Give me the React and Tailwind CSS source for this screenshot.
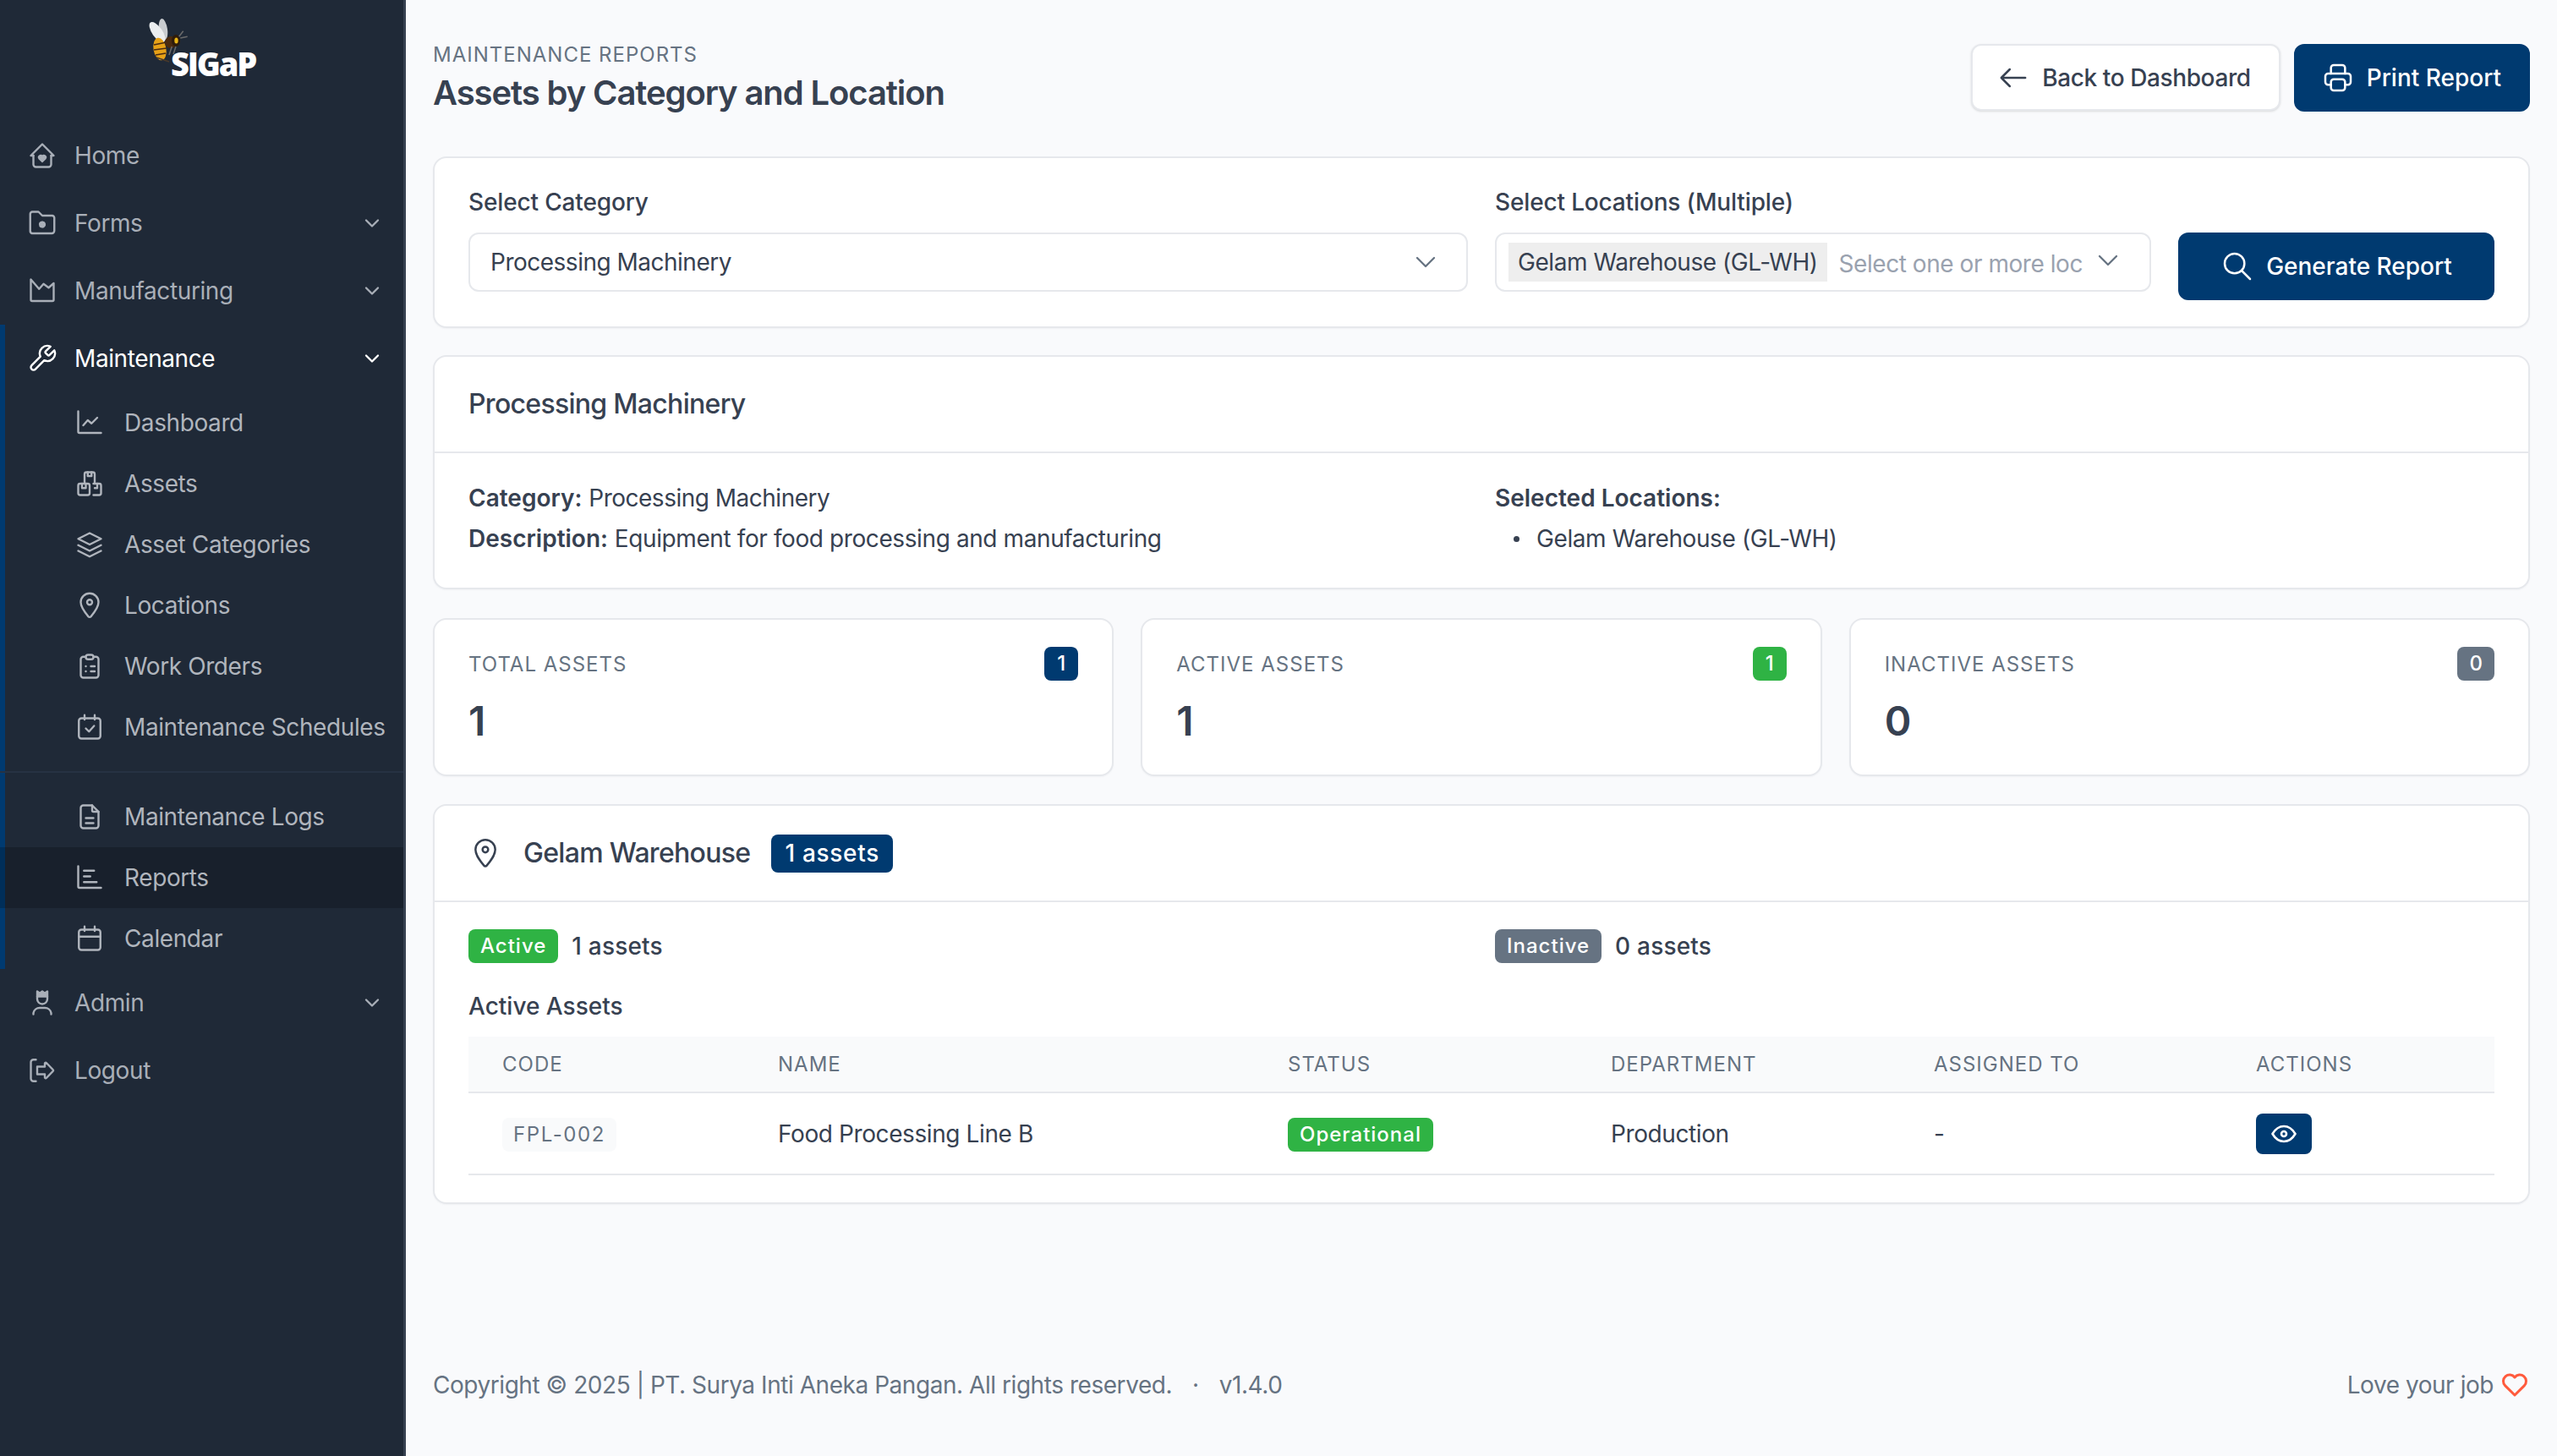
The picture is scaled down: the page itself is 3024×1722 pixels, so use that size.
const font = "font-['Inter',sans-serif]";

const Icon = ({ className = 'w-9 h-9', sw = 1.6, children }) => (
  <svg viewBox="0 0 24 24" fill="none" stroke="currentColor" strokeWidth={sw} strokeLinecap="round" strokeLinejoin="round" className={className}>
    {children}
  </svg>
);

const icons = {
  home: (
    <>
      <path d="M5 12H3l9-9 9 9h-2" />
      <path d="M5 12v7a2 2 0 0 0 2 2h10a2 2 0 0 0 2-2v-7" />
      <path d="M12 17l-2.6-2.6a1.6 1.6 0 0 1 2.6-1.9 1.6 1.6 0 0 1 2.6 1.9z" fill="currentColor" strokeWidth="1" />
    </>
  ),
  forms: (
    <>
      <path d="M4 3h5l3 3h8a2 2 0 0 1 1.5 1.5V18a2 2 0 0 1-2 2H4a2 2 0 0 1-1.5-2V5A2 2 0 0 1 4 3" />
      <circle cx="12" cy="13" r="2" fill="currentColor" strokeWidth="1.5" strokeDasharray="1.2 0.9" />
    </>
  ),
  factory: <path d="M3 3v16a1 1 0 0 0 1 1h16a1 1 0 0 0 1-1V6l-4 3.5-4-3-3.5 4z" />,
  wrench: <path d="M14.7 6.3a1 1 0 0 0 0 1.4l1.6 1.6a1 1 0 0 0 1.4 0l3.77-3.77a6 6 0 0 1-7.94 7.94l-6.91 6.91a2.12 2.12 0 0 1-3-3l6.91-6.91a6 6 0 0 1 7.94-7.94l-3.76 3.76z" />,
  chart: (
    <>
      <path d="M3 3v16a1 1 0 0 0 1 1h17" />
      <path d="M7 14l3.5-4 3 2.5 4.5-4.5" />
    </>
  ),
  packages: (
    <>
      <path d="M8 11V4.5A1.5 1.5 0 0 1 9.5 3h5A1.5 1.5 0 0 1 16 4.5V11" />
      <path d="M10.5 3v3h3V3" />
      <rect x="3" y="12" width="9" height="9" rx="1.5" />
      <path d="M6 12v3.5h3V12" />
      <path d="M15 12h4.5a1.5 1.5 0 0 1 1.5 1.5v6a1.5 1.5 0 0 1-1.5 1.5H15" />
      <path d="M18 12v3.5h-2" />
    </>
  ),
  stack: (
    <>
      <path d="M12 3l-9 4.5 9 4.5 9-4.5z" />
      <path d="M3 12.5l9 4.5 9-4.5" />
      <path d="M3 17l9 4.5 9-4.5" />
    </>
  ),
  pin: (
    <>
      <circle cx="12" cy="9.5" r="2" />
      <path d="M12 2.5a7 7 0 0 1 7 7c0 3.5-2 6.5-6 11.3a1.3 1.3 0 0 1-2 0C7 16 5 13 5 9.5a7 7 0 0 1 7-7z" />
    </>
  ),
  clipboard: (
    <>
      <path d="M9 4.5H7a2 2 0 0 0-2 2V19a2 2 0 0 0 2 2h10a2 2 0 0 0 2-2V6.5a2 2 0 0 0-2-2h-2" />
      <rect x="9" y="3" width="6" height="3.5" rx="1.7" />
      <path d="M9 12h.01M13 12h3M9 16h.01M13 16h3" />
    </>
  ),
  schedule: (
    <>
      <rect x="3.5" y="5" width="17" height="16" rx="2" />
      <path d="M16 2.5V6M8 2.5V6" />
      <path d="M9 13l2.5 2.5L15.5 11" />
    </>
  ),
  file: (
    <>
      <path d="M14 3v4a1 1 0 0 0 1 1h4" />
      <path d="M17 21H7a2 2 0 0 1-2-2V5a2 2 0 0 1 2-2h7l5 5v11a2 2 0 0 1-2 2z" />
      <path d="M9 13h6M9 17h6" />
    </>
  ),
  report: (
    <>
      <path d="M3 3v16a1 1 0 0 0 1 1h17" />
      <path d="M7.5 6.5h8M7.5 11h5M7.5 15.5h10" />
    </>
  ),
  calendar: (
    <>
      <rect x="3.5" y="5" width="17" height="16" rx="2" />
      <path d="M16 2.5V6M8 2.5V6M3.5 10.5h17" />
    </>
  ),
  admin: (
    <>
      <path d="M8 3l2 1.5L12 3l2 1.5L16 3v4H8z" fill="currentColor" />
      <path d="M8 7v2a4 4 0 0 0 8 0V7" />
      <path d="M5 21v-1a5 5 0 0 1 5-4h4a5 5 0 0 1 5 4v1" />
    </>
  ),
  logout: (
    <>
      <path d="M7 3.5H5a2 2 0 0 0-2 2v13a2 2 0 0 0 2 2h2" />
      <path d="M14 9V6.5a.7.7 0 0 1 1.2-.5l5.3 5.500a.7.7 0 0 1 0 1L15.2 18a.7.7 0 0 1-1.2-.5V15H8V9z" />
    </>
  ),
};

const Chevron = ({ className = 'w-7 h-7', sw = 2 }) => (
  <Icon className={className} sw={sw}>
    <path d="M6 9l6 6 6-6" />
  </Icon>
);

function Bee() {
  return (
    <svg viewBox="0 0 50 54" className="h-[54px] w-[50px]">
      <ellipse cx="18" cy="13" rx="5" ry="13" fill="#c9ccd0" transform="rotate(-8 18 13)" />
      <ellipse cx="11" cy="16" rx="6" ry="14" fill="#eceef0" transform="rotate(-35 11 16)" />
      <ellipse cx="14" cy="36" rx="7.5" ry="13.5" fill="#e6a117" transform="rotate(-10 14 36)" />
      <path d="M7 31l15-3M7 37l15-2M9 43l12-2" stroke="#4a2a10" strokeWidth="1.5" fill="none" />
      <path d="M10 46l15 5" stroke="#4a3a2a" strokeWidth="1.5" fill="none" />
      <circle cx="27" cy="28" r="7" fill="#4a2a10" />
      <ellipse cx="33" cy="26" rx="5" ry="7" fill="#2e1c0c" />
      <ellipse cx="33.5" cy="26" rx="2.2" ry="3.5" fill="#e8b516" />
      <path d="M36.7 21.3l5-6.6M38.3 23l8.4-1.7M28.3 33L25 43M33 33l-3 9" stroke="#6b6b6b" strokeWidth="1.5" fill="none" />
    </svg>
  );
}

function NavItem({ icon, label, hasMenu, active }) {
  return (
    <div className={`flex h-20 items-center pr-[23px] pl-[32px] ${active ? 'text-white' : 'text-[#a9afb8]'}`}>
      <span className="flex w-[56px] shrink-0">
        <Icon>{icons[icon]}</Icon>
      </span>
      <span className="flex-1 text-[28px] leading-none tracking-[-0.4px]">{label}</span>
      {hasMenu && <Chevron />}
    </div>
  );
}

function SubItem({ icon, label, current }) {
  return (
    <div className={`flex h-[72px] items-center text-[#b0b5bd] ${current ? '-ml-[6px] bg-black/20 pl-[88px]' : 'pl-[82px]'}`}>
      <span className="flex w-[59px] shrink-0">
        <Icon>{icons[icon]}</Icon>
      </span>
      <span className="text-[28px] leading-none tracking-[-0.4px] whitespace-nowrap">{label}</span>
    </div>
  );
}

function Sidebar() {
  return (
    <aside className="w-[480px] shrink-0 border-r-[3px] border-[#374151] bg-[#1f2937]">
      <div className="h-[144px] pt-[22px] pl-[175px]">
        <div className="relative w-[130px]">
          <Bee />
          <span className="absolute top-[29px] left-[27px] font-['Open_Sans',sans-serif] text-[38px] leading-[48px] font-extrabold tracking-[-2.2px] text-white">SIGaP</span>
        </div>
      </div>
      <NavItem icon="home" label="Home" />
      <NavItem icon="forms" label="Forms" hasMenu />
      <NavItem icon="factory" label="Manufacturing" hasMenu />
      <div className="border-l-[6px] border-[#003a70]">
        <div className="-ml-[6px]">
          <NavItem icon="wrench" label="Maintenance" hasMenu active />
        </div>
        <SubItem icon="chart" label="Dashboard" />
        <SubItem icon="packages" label="Assets" />
        <SubItem icon="stack" label="Asset Categories" />
        <SubItem icon="pin" label="Locations" />
        <SubItem icon="clipboard" label="Work Orders" />
        <SubItem icon="schedule" label="Maintenance Schedules" />
        <div className="-ml-[6px] mt-4 mb-4 h-[2px] bg-[#263243]" />
        <SubItem icon="file" label="Maintenance Logs" />
        <SubItem icon="report" label="Reports" current />
        <SubItem icon="calendar" label="Calendar" />
      </div>
      <NavItem icon="admin" label="Admin" hasMenu />
      <NavItem icon="logout" label="Logout" />
    </aside>
  );
}

const Card = ({ className = '', children }) => (
  <div className={`rounded-2xl border-2 border-[#e6e8ec] bg-white shadow-[0_1px_2px_rgba(24,36,51,0.04)] ${className}`}>{children}</div>
);

function Header() {
  return (
    <div className="flex items-start justify-between">
      <div>
        <div className="mt-[1px] text-[24px] leading-6 tracking-[1px] text-[#667382] uppercase">Maintenance Reports</div>
        <h1 className="mt-[9px] text-[40px] leading-[48px] font-semibold tracking-[-1.1px] text-[#374151]">Assets by Category and Location</h1>
      </div>
      <div className="flex items-start gap-4">
        <button className="flex h-[79px] items-center gap-[14px] rounded-xl border-2 border-[#e6e8ec] bg-white pr-[33px] pl-[28px] text-[28px] font-medium tracking-[-0.4px] text-[#374151] shadow-sm">
          <Icon sw={1.5} className="h-10 w-10"><path d="M3.5 12h17M3.5 12l6 6M3.5 12l6-6" /></Icon>
          Back to Dashboard
        </button>
        <button className="flex h-[80px] items-center gap-[14px] rounded-xl bg-[#003a70] pr-[34px] pl-8 text-[28px] font-medium text-white">
          <Icon sw={1.5} className="h-10 w-10">
            <path d="M17 17h2a2 2 0 0 0 2-2v-4a2 2 0 0 0-2-2H5a2 2 0 0 0-2 2v4a2 2 0 0 0 2 2h2" />
            <path d="M17 9V5a2 2 0 0 0-2-2H9a2 2 0 0 0-2 2v4" />
            <rect x="7" y="13" width="10" height="8" rx="2" />
          </Icon>
          Print Report
        </button>
      </div>
    </div>
  );
}

function FilterCard() {
  return (
    <Card className="mt-[51px] flex h-[203px] gap-8 px-10 pt-[32px]">
      <div className="w-[1182px] shrink-0">
        <div className="text-[28px] leading-10 font-medium tracking-[-0.15px] text-[#374151]">Select Category</div>
        <div className="mt-[16px] flex h-[70px] items-center justify-between rounded-xl border-2 border-[#e6e8ec] pr-[28px] pl-[24px] text-[28px] tracking-[-0.5px] text-[#374151]">
          Processing Machinery
          <Chevron className="h-10 w-10 text-[#667382]" sw={1.4} />
        </div>
      </div>
      <div className="w-[776px] shrink-0">
        <div className="text-[28px] leading-10 font-medium tracking-[-0.15px] text-[#374151]">Select Locations (Multiple)</div>
        <div className="mt-[16px] flex h-[70px] items-center rounded-xl border-2 border-[#e6e8ec] pl-[14px] text-[28px] tracking-[-0.45px]">
          <span className="flex h-[46px] items-center bg-[#eeeeee] px-[11px] whitespace-nowrap text-[#374151]">Gelam Warehouse (GL-WH)</span>
          <span className="mt-[4px] ml-[14px] whitespace-nowrap text-[#9aa2af]">Select one or more loc</span>
          <Chevron className="mb-[4px] ml-[10px] h-10 w-10 text-[#667382]" sw={1.4} />
        </div>
      </div>
      <button className="mt-[56px] flex h-20 w-[374px] shrink-0 items-center justify-center gap-[14px] rounded-xl bg-[#003a70] text-[28px] font-medium text-white">
        <Icon sw={1.5} className="h-10 w-10">
          <circle cx="10" cy="10" r="7" />
          <path d="M21 21l-6-6" />
        </Icon>
        Generate Report
      </button>
    </Card>
  );
}

function InfoCard() {
  return (
    <Card className="mt-8">
      <div className="flex h-[114px] items-center border-b-2 border-[#e6e8ec] px-10 text-[32px] font-medium tracking-[-0.7px] text-[#374151]">Processing Machinery</div>
      <div className="flex px-10 pt-[29px] pb-[34px] text-[28px] leading-[48px] text-[#374151]">
        <div className="w-[1214px]">
          <div><span className="font-semibold">Category:</span> <span className="tracking-[-0.5px]">Processing Machinery</span></div>
          <div><span className="font-semibold">Description:</span> <span className="tracking-[-0.4px]">Equipment for food processing and manufacturing</span></div>
        </div>
        <div>
          <div className="font-semibold">Selected Locations:</div>
          <div className="flex items-center pl-[22px] tracking-[-0.4px]">
            <span className="mr-[20px] h-[7px] w-[7px] rounded-full bg-[#374151]" />
            Gelam Warehouse (GL-WH)
          </div>
        </div>
      </div>
    </Card>
  );
}

const stats = [
  { label: 'Total Assets', value: '1', badge: 'bg-[#003a70]' },
  { label: 'Active Assets', value: '1', badge: 'bg-[#2fb344]' },
  { label: 'Inactive Assets', value: '0', badge: 'bg-[#667382]' },
];

function StatCards() {
  return (
    <div className="mt-[34px] grid grid-cols-3 gap-8">
      {stats.map((s) => (
        <Card key={s.label} className="h-[187px] px-10 pt-[32px]">
          <div className="flex items-start justify-between">
            <span className="mt-[3px] text-[24px] leading-9 tracking-[1px] text-[#667382] uppercase">{s.label}</span>
            <span className={`flex h-10 min-w-10 items-center justify-center rounded-lg px-[14px] text-[24px] font-medium text-white ${s.badge}`}>{s.value}</span>
          </div>
          <div className="mt-[20px] text-[48px] leading-[56px] font-semibold text-[#374151]">{s.value}</div>
        </Card>
      ))}
    </div>
  );
}

const Badge = ({ className, children }) => (
  <span className={`inline-flex h-10 items-center rounded-lg px-[14px] text-[24px] font-medium tracking-[1px] text-white ${className}`}>{children}</span>
);

function AssetTable() {
  return (
    <table className="mt-[16px] w-full table-fixed text-[28px] tracking-[-0.4px] text-[#374151]">
      <thead>
        <tr className="h-[66px] border-b-2 border-[#e6e8ec] bg-[#f9fafb] text-left text-[24px] tracking-[1px] text-[#667382] uppercase">
          <th className="w-[326px] pl-10 font-normal">Code</th>
          <th className="w-[603px] pl-10 font-normal">Name</th>
          <th className="w-[382px] pl-10 font-normal">Status</th>
          <th className="w-[382px] pl-10 font-normal">Department</th>
          <th className="w-[381px] pl-10 font-normal">Assigned To</th>
          <th className="pl-10 font-normal">Actions</th>
        </tr>
      </thead>
      <tbody>
        <tr className="h-[97px] border-b-2 border-[#e6e8ec]">
          <td className="pl-10">
            <span className="inline-flex h-10 items-center rounded-lg bg-[#f9fafb] px-[13px] text-[24px] tracking-[1.6px] text-[#667382]">FPL-002</span>
          </td>
          <td className="pl-10">Food Processing Line B</td>
          <td className="pl-10"><Badge className="bg-[#2fb344]">Operational</Badge></td>
          <td className="pl-10">Production</td>
          <td className="pl-10">-</td>
          <td className="pl-10">
            <button className="flex h-12 w-[66px] items-center justify-center rounded-lg bg-[#003a70] text-white">
              <Icon sw={1.75} className="h-9 w-9">
                <path d="M10 12a2 2 0 1 0 4 0 2 2 0 0 0-4 0" />
                <path d="M21 12c-2.4 4-5.4 6-9 6s-6.6-2-9-6c2.4-4 5.4-6 9-6s6.6 2 9 6" />
              </Icon>
            </button>
          </td>
        </tr>
      </tbody>
    </table>
  );
}

function LocationCard() {
  return (
    <Card className="mt-[33px] h-[473px]">
      <div className="flex h-[114px] items-center gap-[25px] border-b-2 border-[#e6e8ec] px-10 text-[32px] font-medium text-[#374151]">
        <span className="flex items-center gap-[25px] tracking-[-0.7px]">
          <Icon className="h-10 w-10" sw={1.5}>{icons.pin}</Icon>
          Gelam Warehouse
        </span>
        <span className="flex h-[45px] items-center rounded-lg bg-[#003a70] px-[16px] text-[28px] font-medium tracking-[0.7px] text-white">1 assets</span>
      </div>
      <div className="px-10 pt-[31px]">
        <div className="flex text-[28px] font-medium tracking-[0.2px] text-[#374151]">
          <div className="flex w-[1214px] items-center gap-4">
            <Badge className="bg-[#2fb344]">Active</Badge>
            1 assets
          </div>
          <div className="flex items-center gap-4">
            <Badge className="bg-[#667382]">Inactive</Badge>
            0 assets
          </div>
        </div>
        <div className="mt-[30px] text-[28px] leading-10 font-medium text-[#374151]">Active Assets</div>
        <AssetTable />
      </div>
    </Card>
  );
}

function Footer() {
  return (
    <div className="mt-auto flex items-center justify-between pb-[64px] text-[28px] leading-10 tracking-[-0.45px] text-[#667382]">
      <div className="flex gap-6">
        <span>Copyright © 2025 | PT. Surya Inti Aneka Pangan. All rights reserved.</span>
        <span>·</span>
        <span>v1.4.0</span>
      </div>
      <div className="flex items-center gap-[7px]">
        Love your job
        <svg viewBox="0 0 24 24" fill="none" stroke="#ff5a3c" strokeWidth="2" strokeLinecap="round" strokeLinejoin="round" className="h-9 w-9">
          <path d="M19.5 12.572L12 20l-7.5-7.428A5 5 0 1 1 12 6.006a5 5 0 1 1 7.5 6.572" />
        </svg>
      </div>
    </div>
  );
}

export default function App() {
  return (
    <div className={`flex h-[1722px] w-[3024px] overflow-hidden bg-[#f9fafc] ${font}`}>
      <Sidebar />
      <main className="flex flex-1 flex-col px-8 pt-[52px]">
        <Header />
        <FilterCard />
        <InfoCard />
        <StatCards />
        <LocationCard />
        <Footer />
      </main>
    </div>
  );
}
